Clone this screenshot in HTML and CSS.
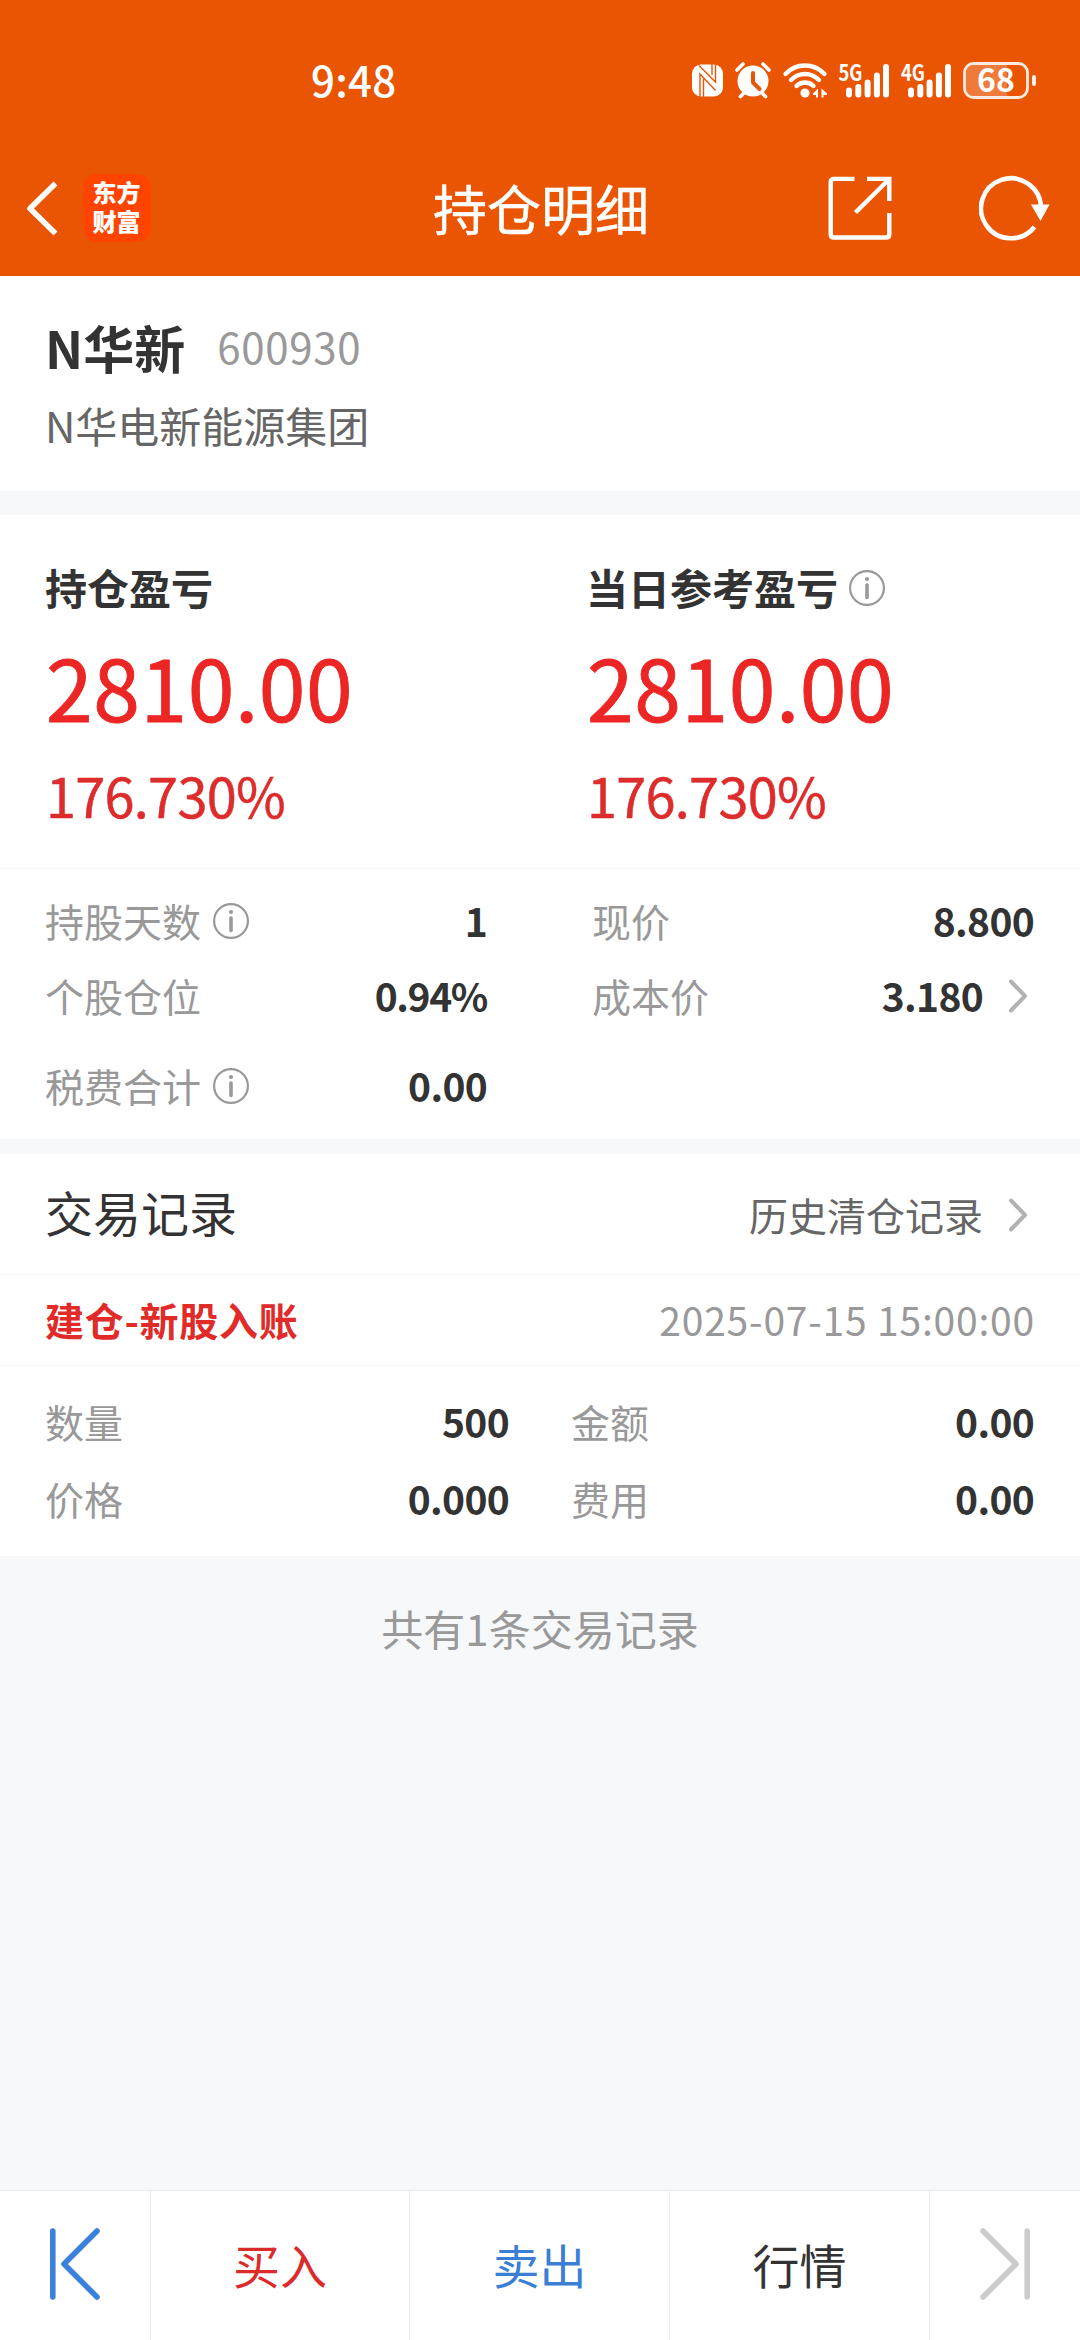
FILE: index.html
```html
<!DOCTYPE html>
<html lang="zh-CN">
<head>
<meta charset="utf-8">
<title>持仓明细</title>
<link rel="stylesheet" href="styles.css">
</head>
<body>
<svg class="defs" aria-hidden="true">
  <symbol id="info" viewBox="0 0 36 36">
    <circle cx="18" cy="18" r="16.9" fill="none" stroke="currentColor" stroke-width="2.200"/>
    <circle cx="18" cy="9" r="2.100" fill="currentColor"/>
    <path d="M18 15v12.500" stroke="currentColor" stroke-width="3.600" stroke-linecap="round"/>
  </symbol>
  <symbol id="more" viewBox="0 0 20 34">
    <path d="M3 2.500l14 14.500-14 14.500" fill="none" stroke="#b2b2b2" stroke-width="4" stroke-linecap="round" stroke-linejoin="round"/>
  </symbol>
</svg>
<div class="screen">
  <header class="top">
    <div class="status">
      <span class="clock">9:48</span>
      <svg class="status-icons" width="352" height="44" viewBox="0 0 352 44" fill="#fff">
        <!-- NFC -->
        <rect x="2" y="4.500" width="31" height="32" rx="9"/>
        <path d="M9 5.500L25.500 22V5M25.500 5v-1.500M10 36.500V14L25.500 30.500" fill="none" stroke="#ea5504" stroke-width="1.400"/>
        <path d="M13.500 37V19M22 4v11" fill="none" stroke="#ea5504" stroke-width="1.400"/>
        <!-- alarm -->
        <circle cx="63" cy="21" r="15.500"/>
        <path d="M47 10l6-6M79 10l-6-6M50.500 36.500l5-5M75.500 36.500l-5-5" stroke="#fff" stroke-width="3.600" stroke-linecap="round"/>
        <path d="M63 13v9.500l6.500 6.500" fill="none" stroke="#ea5504" stroke-width="4" stroke-linecap="round" stroke-linejoin="round"/>
        <!-- wifi -->
        <g fill="none" stroke="#fff" stroke-width="4.400" stroke-linecap="round">
          <path d="M95.500 14q8-8.500 19.500-8.500T134.500 14"/>
          <path d="M101 20q6-6 14-6t14 6"/>
          <path d="M106.500 26q3.500-3.500 8.500-3.500t8.500 3.500"/>
        </g>
        <circle cx="115" cy="33" r="4.600"/>
        <path d="M123 33.500l5-5v9h-2V35h-3zM137 33.500l-5.500-5v9h2V35h3.500z"/>
        <!-- first signal -->
        <text class="net" x="148.500" y="20.500" textLength="24" lengthAdjust="spacingAndGlyphs">5G</text>
        <g stroke="#fff" stroke-width="6" stroke-linecap="round">
          <path d="M159 30.500v4M168.300 27v7.500M177.600 22.500v12M186.900 15.500v19M196 7v27.500"/>
          <path d="M221 30.500v4M230.300 27v7.500M239.600 22.500v12M248.900 15.500v19M258 7v27.500"/>
        </g>
        <text class="net" x="211" y="20.500" textLength="24" lengthAdjust="spacingAndGlyphs">4G</text>
        <!-- battery -->
        <path d="M284 5h33v31h-33q-8-1-8-8V13q0-7 8-8z" fill-opacity=".22"/>
        <rect x="274.500" y="3.500" width="63" height="34" rx="9" fill="none" stroke="#fff" stroke-opacity=".88" stroke-width="2.800"/>
        <rect x="342" y="15" width="4" height="11" rx="2" fill-opacity=".9"/>
        <text class="level" x="306" y="31.500" text-anchor="middle">68</text>
      </svg>
    </div>
    <div class="nav">
      <svg class="back" width="36" height="60" viewBox="0 0 36 60"><path d="M30.500 5.500L5 30.500l25.500 25" fill="none" stroke="#fff" stroke-width="5.500" stroke-linejoin="round"/></svg>
      <div class="logo"><span>东方财富</span></div>
      <h1 class="title">持仓明细</h1>
      <svg class="share" width="64" height="64" viewBox="0 0 64 64" fill="none" stroke="#fff" stroke-width="4.400">
        <path d="M26.500 2.900H6q-3.300 0-3.300 3.300v52q0 3.300 3.300 3.300h52q3.300 0 3.300-3.300V37"/>
        <path d="M39 2.900h22.300V25M61 3.200L27.500 36.500"/>
      </svg>
      <svg class="refresh" width="72" height="66" viewBox="0 0 72 66">
        <path d="M55.500 52A30 30 0 1 1 62 32" fill="none" stroke="#fff" stroke-width="4.600"/>
        <path d="M52 29.500h18.500L61.500 46z" fill="#fff"/>
      </svg>
    </div>
  </header>

  <section class="stock">
    <div class="stock-line"><span class="stock-name">N华新</span><span class="stock-code">600930</span></div>
    <div class="stock-full">N华电新能源集团</div>
  </section>

  <section class="profit">
    <div class="profit-col">
      <div class="profit-label">持仓盈亏</div>
      <div class="profit-value">2810.00</div>
      <div class="profit-rate">176.730%</div>
    </div>
    <div class="profit-col">
      <div class="profit-label">当日参考盈亏<svg class="info"><use href="#info"/></svg></div>
      <div class="profit-value">2810.00</div>
      <div class="profit-rate">176.730%</div>
    </div>
  </section>

  <section class="stats">
    <div class="cell"><span class="key">持股天数<svg class="info"><use href="#info"/></svg></span><b>1</b></div>
    <div class="cell"><span class="key">现价</span><b>8.800</b></div>
    <div class="cell"><span class="key">个股仓位</span><b class="percent">0.94%</b></div>
    <div class="cell"><span class="key">成本价</span><b class="push">3.180</b><svg class="more"><use href="#more"/></svg></div>
    <div class="cell"><span class="key">税费合计<svg class="info"><use href="#info"/></svg></span><b>0.00</b></div>
  </section>

  <section class="records">
    <div class="records-head">
      <h2>交易记录</h2>
      <span class="history">历史清仓记录</span><svg class="more"><use href="#more"/></svg>
    </div>
    <div class="entry-head"><strong>建仓-新股入账</strong><time>2025-07-15 15:00:00</time></div>
    <div class="entry">
      <div class="cell"><span class="key">数量</span><b>500</b></div>
      <div class="cell"><span class="key">金额</span><b>0.00</b></div>
      <div class="cell"><span class="key">价格</span><b>0.000</b></div>
      <div class="cell"><span class="key">费用</span><b>0.00</b></div>
    </div>
  </section>
  <p class="total">共有1条交易记录</p>

  <footer class="bar">
    <div class="bar-item"><svg width="56" height="72" viewBox="0 0 56 72" fill="none" stroke="#3b81da" stroke-width="5.600" stroke-linecap="round" stroke-linejoin="round"><path d="M5.800 3v66M50 3L17 36l33 33"/></svg></div>
    <div class="bar-item buy">买入</div>
    <div class="bar-item sell">卖出</div>
    <div class="bar-item">行情</div>
    <div class="bar-item"><svg width="56" height="72" viewBox="0 0 56 72" fill="none" stroke="#ccc" stroke-width="5.600" stroke-linecap="round" stroke-linejoin="round"><path d="M50.200 3v66M6 3l33 33L6 69"/></svg></div>
  </footer>
</div>
</body>
</html>
```
FILE: styles.css
```css
* { box-sizing: border-box; }
body {
  margin: 0;
  background: #f7f8fa;
  color: #333;
  font-family: "Noto Sans CJK SC", sans-serif;
}
h1, h2, p { margin: 0; font-weight: 400; }
svg { display: block; flex: none; }
.defs { width: 0; height: 0; position: absolute; }
.screen { width: 1080px; height: 2340px; display: flex; flex-direction: column; overflow: hidden; }

.top { height: 276px; background: #ea5504; color: #fff; }
.status { height: 144px; padding: 20px 30px 0 311px; display: flex; align-items: center; justify-content: space-between; }
.clock { font-size: 42px; line-height: 60px; font-weight: 500; padding-bottom: 7px; letter-spacing: .3px; }
.status-icons { margin-right: 8px; overflow: visible; }
.net { font: 700 22px "Noto Sans CJK SC", sans-serif; }
.level { font: 700 32px "Noto Sans CJK SC", sans-serif; }
.nav { height: 132px; padding-bottom: 4px; display: grid; grid-template-columns: 83px 350px 395px 151px 1fr; align-items: center; }
.back { margin-left: 25px; }
.logo {
  width: 68px; height: 68px; border-radius: 14px; background: #ff4400;
  display: flex; align-items: center; justify-content: center;
  font-size: 24px; line-height: 29px; font-weight: 900; padding-bottom: 4px;
}
.logo span { width: 49px; word-break: break-all; }
.title { font-size: 54px; line-height: 80px; padding-bottom: 1px; -webkit-text-stroke: .5px currentColor; }

.stock { height: 215px; background: #fff; padding: 32px 45px 0; }
.stock-line { display: flex; align-items: center; line-height: 75px; }
.stock-name { font-size: 51px; font-weight: 700; }
.stock-code { margin-left: 32px; padding-bottom: 4px; font-size: 42px; color: #999; letter-spacing: .7px; }
.stock-full { margin-top: 13px; font-size: 42px; line-height: 50px; color: #666; }

.profit { margin-top: 24px; height: 353px; background: #fff; padding: 42px 0 0 46px; display: grid; grid-template-columns: 541px 1fr; }
.profit-label { display: flex; align-items: center; font-size: 42px; line-height: 60px; font-weight: 700; margin-left: -1px; }
.profit-label .info { margin-left: 11px; margin-top: 2px; }
.profit-value { margin-top: 19px; font-size: 84px; line-height: 100px; color: #ec2624; letter-spacing: .6px; -webkit-text-stroke: .9px currentColor; }
.profit-rate { margin-top: 29px; font-size: 54px; line-height: 60px; color: #dd2c2c; letter-spacing: -.7px; -webkit-text-stroke: .5px currentColor; }
.info { width: 36px; height: 36px; color: #999; margin: 2px 0 0 12px; }

.stats {
  height: 271px; background: #fff; border-top: 1px solid #f5f6f7; padding: 11px 46px 0 45px;
  display: grid; grid-template-columns: 442px 442px; column-gap: 105px; grid-template-rows: 80px 70px 110px;
}
.cell { display: flex; align-items: center; justify-content: space-between; font-size: 39px; line-height: 60px; }
.key { display: flex; align-items: center; color: #999; }
.cell b { font-weight: 700; letter-spacing: -.7px; }
.cell .percent { letter-spacing: -1.4px; }
.push { margin-left: auto; }
.more { width: 20px; height: 34px; margin: 2px 6px 0 25px; }

.records { margin-top: 15px; background: #fff; }
.records-head { height: 121px; border-bottom: 1px solid #f5f6f7; padding: 0 46px 0 45px; display: flex; align-items: center; }
.records-head h2 { margin-right: auto; padding-bottom: 6px; font-size: 48px; line-height: 70px; }
.history { font-size: 39px; line-height: 60px; color: #666; }
.entry-head { height: 91px; border-bottom: 1px solid #f5f6f7; padding: 0 45px 3px; display: flex; align-items: center; justify-content: space-between; font-size: 39px; line-height: 60px; }
.entry-head strong { color: #e02b29; letter-spacing: .7px; }
.entry-head time { color: #999; letter-spacing: .8px; }
.entry { height: 190px; padding: 16px 46px 0 45px; display: grid; grid-template-columns: 464px 463px; column-gap: 62px; grid-template-rows: 77px 77px; }
.total { padding-top: 42px; font-size: 42px; line-height: 60px; color: #999; text-align: center; }

.bar { margin-top: auto; height: 150px; background: #fff; border-top: 1px solid #e9ebee; display: grid; grid-template-columns: 151px 259px 260px 260px 150px; }
.bar-item { display: flex; align-items: center; justify-content: center; padding-bottom: 3px; font-size: 47px; line-height: 70px; border-right: 1px solid #e9ebee; }
.bar-item:last-child { border-right: 0; }
.buy { color: #dc2b2b; }
.sell { color: #3b7fd4; }
```
